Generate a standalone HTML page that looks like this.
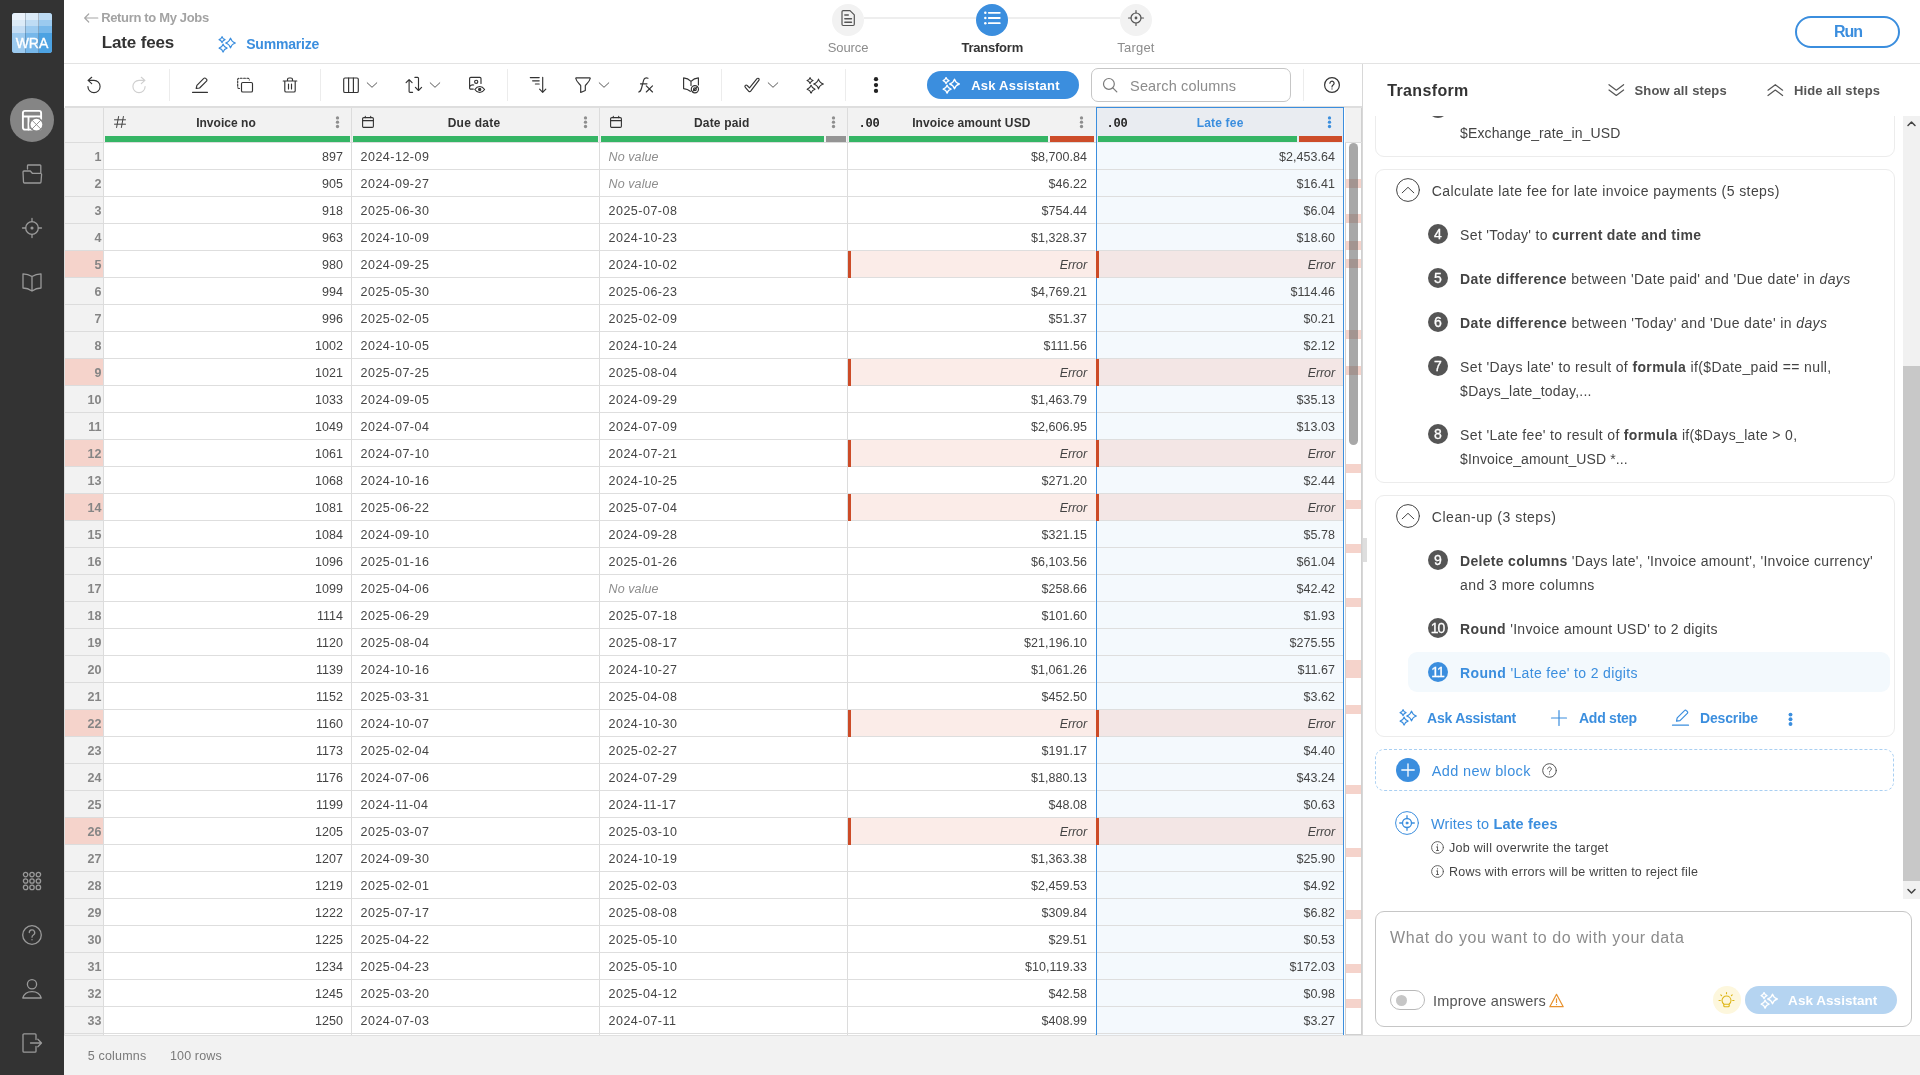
<!DOCTYPE html>
<html lang="en">
<head>
<meta charset="utf-8">
<title>Late fees - Transform</title>
<style>
html,body{margin:0;padding:0;}
body{width:1920px;height:1075px;overflow:hidden;background:#fff;font-family:"Liberation Sans",Arial,sans-serif;color:#444;}
#app{will-change:transform;position:relative;width:1920px;height:1075px;overflow:hidden;background:#fff;}
.a{position:absolute;}
.t{position:absolute;white-space:nowrap;}
b{font-weight:bold;}
svg{position:absolute;overflow:visible;}
.ic{fill:none;stroke:#333;stroke-width:1.15;stroke-linecap:round;stroke-linejoin:round;}
.side{position:absolute;left:0;top:0;width:64px;height:1075px;background:#333;}
.hdr{position:absolute;left:64px;top:0;width:1856px;height:63px;background:#fff;border-bottom:1px solid #e3e3e3;}
.foot{position:absolute;left:64px;top:1035px;width:1856px;height:39px;background:#f2f2f2;border-top:1px solid #e0e0e0;}
.sep{position:absolute;top:69px;width:1px;height:32px;background:#ececec;}
/* table */
.grid{position:absolute;left:65px;top:108px;width:1297px;height:927px;background:#fff;overflow:hidden;}
.hrow{position:absolute;left:0;top:0;width:1297px;height:35px;background:#f2f2f2;}
.rn{position:absolute;left:0;width:38px;height:26px;background:#f2f2f2;border-bottom:1px solid #dcdcdc;border-right:1px solid #dcdcdc;font-weight:bold;font-size:12.5px;line-height:29px;color:#858585;text-align:right;}
.rn span{padding-right:1.5px;}
.rn.e{background:#f5d3cb;}
.c{position:absolute;width:247px;height:26px;border-bottom:1px solid #dedede;border-right:1px solid #dcdcdc;font-size:12.5px;line-height:27px;color:#444;letter-spacing:0.5px;white-space:nowrap;}
.c span{position:absolute;top:1px;}
.c.l span{left:8.5px;}
.c.r span{right:8px;letter-spacing:0.04px;}
.c.nv span{color:#8e8e8e;font-style:italic;letter-spacing:0.1px;}
.c.err{background:#fbece8;}
.c.err span{font-style:italic;letter-spacing:-0.1px;right:8px;}
.c.err i.bar{position:absolute;left:0;top:0;width:3px;height:27px;background:#cc4b27;z-index:2;}
.c.nb{border-right-color:transparent;}
.c.sel{background:#f4f9fd;}
.c.sel.err{background:#f3e6e5;}
.hc{position:absolute;top:0;width:247px;height:35px;border-right:1px solid #dcdcdc;}
.hc .bar{position:absolute;left:1px;top:28px;height:6px;}
.hc .ttl{position:absolute;left:0;width:244px;top:5px;text-align:center;font-weight:bold;font-size:12px;line-height:20px;color:#333;}
</style>
</head>
<body>
<div id="app">
<div class="side">
<div class="a" style="left:12px;top:13px;width:40px;height:40px;border-radius:3px;overflow:hidden;background:#8ec3f0;">
<i class="a" style="left:0px;top:0px;width:13.6px;height:7.3px;background:#eaf2fb"></i><i class="a" style="left:0px;top:7px;width:13.6px;height:6.5px;background:#dcebf8"></i><i class="a" style="left:0px;top:13.2px;width:13.6px;height:7.3px;background:#c5def5"></i><i class="a" style="left:0px;top:20.2px;width:13.6px;height:20.1px;background:#9ccaef"></i><i class="a" style="left:13.3px;top:0px;width:13.7px;height:7.3px;background:#dcebf8"></i><i class="a" style="left:13.3px;top:7px;width:13.7px;height:6.5px;background:#bfdcf4"></i><i class="a" style="left:13.3px;top:13.2px;width:13.7px;height:7.3px;background:#9dcbf0"></i><i class="a" style="left:13.3px;top:20.2px;width:13.7px;height:20.1px;background:#76b7ea"></i><i class="a" style="left:26.7px;top:0px;width:13.6px;height:7.3px;background:#bddbf4"></i><i class="a" style="left:26.7px;top:7px;width:13.6px;height:6.5px;background:#9bcaef"></i><i class="a" style="left:26.7px;top:13.2px;width:13.6px;height:7.3px;background:#77b8ea"></i><i class="a" style="left:26.7px;top:20.2px;width:13.6px;height:20.1px;background:#4ca2e2"></i><i class="a" style="left:13px;top:0;width:1px;height:40px;background:rgba(60,70,80,0.28)"></i><i class="a" style="left:26px;top:0;width:1px;height:40px;background:rgba(60,70,80,0.28)"></i>
<div class="t" style="left:0;width:40px;text-align:center;top:22.3px;font-size:14px;line-height:16px;color:#fff;letter-spacing:0;-webkit-text-stroke:0.35px #fff;">WRA</div>
</div>
<div class="a" style="left:10px;top:98px;width:44px;height:44px;border-radius:22px;background:#858585;"></div>
<svg class="ic" style="left:21px;top:109px;stroke:#fff;stroke-width:1.9" width="22" height="22" viewBox="0 0 22 22"><rect x="1.900" y="1.900" width="18.200" height="18.700" rx="2"/><path d="M1.900,7.500 H20.100 M7.500,7.500 V20.600"/><circle cx="15.400" cy="15.600" r="7.200" fill="#858585" stroke="none"/><circle cx="15.400" cy="15.600" r="5.900" fill="#fff" stroke="none"/><path d="M11.200,11.400 L19.600,19.800 M19.600,11.400 L11.200,19.800" stroke="#858585" stroke-width="0.900"/></svg>
<svg class="ic" style="left:22px;top:164px;stroke:#9a9a9a;stroke-width:1.3" width="20" height="20" viewBox="0 0 20 20"><path d="M5.5,5 V1.8 a0.8,0.8 0 0 1 0.8,-0.8 H18 a0.8,0.8 0 0 1 0.8,0.8 V8.5 M1,8 a1,1 0 0 1 1,-1 H8.3 L10.3,9.3 H18.6 a1,1 0 0 1 1,1 L19,18 a1,1 0 0 1 -1,1 H2.5 a1,1 0 0 1 -1,-1 Z"/></svg>
<svg class="ic" style="left:22px;top:218px;stroke:#9a9a9a;stroke-width:1.3" width="20" height="20" viewBox="0 0 20 20"><circle cx="10" cy="10" r="6.3"/><circle cx="10" cy="10" r="0.9" fill="#9a9a9a"/><path d="M10,0.5 V3.7 M10,16.3 V19.5 M0.5,10 H3.7 M16.3,10 H19.5"/></svg>
<svg class="ic" style="left:22px;top:272px;stroke:#9a9a9a;stroke-width:1.3" width="20" height="20" viewBox="0 0 20 20"><path d="M10,4.5 C7.5,2.8 4,1.8 1,1.8 V16 C4,16 7.5,17.2 10,19 C12.500,17.2 16,16 19,16 V1.8 C16,1.8 12.5,2.8 10,4.5 V19"/></svg>
<svg class="ic" style="left:22px;top:871px;stroke:#9a9a9a;stroke-width:1.3" width="20" height="20" viewBox="0 0 20 20"><circle cx="3.6" cy="3.6" r="2.2"/><circle cx="3.6" cy="10.0" r="2.2"/><circle cx="3.6" cy="16.400000000000002" r="2.2"/><circle cx="10.0" cy="3.6" r="2.2"/><circle cx="10.0" cy="10.0" r="2.2"/><circle cx="10.0" cy="16.400000000000002" r="2.2"/><circle cx="16.400000000000002" cy="3.6" r="2.2"/><circle cx="16.400000000000002" cy="10.0" r="2.2"/><circle cx="16.400000000000002" cy="16.400000000000002" r="2.2"/></svg>
<svg class="ic" style="left:22px;top:925px;stroke:#9a9a9a;stroke-width:1.3" width="20" height="20" viewBox="0 0 20 20"><circle cx="10" cy="10" r="9.3"/><path d="M7.3,7.6 a2.7,2.7 0 1 1 4,2.4 c-0.9,0.5 -1.3,1 -1.3,2.2"/><circle cx="10" cy="14.7" r="0.7" fill="#9a9a9a" stroke="none"/></svg>
<svg class="ic" style="left:22px;top:979px;stroke:#9a9a9a;stroke-width:1.3" width="20" height="20" viewBox="0 0 20 20"><circle cx="10" cy="5.3" r="4.6"/><path d="M0.8,19 C2,14.7 5.5,12.6 10,12.6 C14.5,12.6 18,14.7 19.2,19 Z"/></svg>
<svg class="ic" style="left:22px;top:1033px;stroke:#9a9a9a;stroke-width:1.3" width="20" height="20" viewBox="0 0 20 20"><path d="M14,6.5 V1.8 a1,1 0 0 0 -1,-1 H2 a1,1 0 0 0 -1,1 V18.200 a1,1 0 0 0 1,1 H13 a1,1 0 0 0 1,-1 V13.500 M8.500,10 H19.300 M15.800,6.300 L19.500,10 L15.800,13.700"/></svg>
</div>
<div class="hdr"></div>
<svg class="ic" style="left:84px;top:11.5px;stroke:#a6a6a6;stroke-width:1.2" width="14" height="12" viewBox="0 0 14 12"><path d="M13.800,6 H0.700 M4.700,2 L0.700,6 L4.700,10"/></svg>
<div class="t" style="top:7.9px;font-size:13px;line-height:20px;color:#a3a3a3;letter-spacing:-0.341px;left:101.2px;"><b>Return to My Jobs</b></div>
<div class="t" style="top:31.2px;font-size:17px;line-height:24px;color:#333;letter-spacing:-0.156px;left:101.8px;"><b>Late fees</b></div>
<svg class="ic" style="left:218px;top:35.5px;stroke:#3b8ede;stroke-width:1.2" width="17" height="17" viewBox="0 0 17 17"><path d="M12.5,2.15 Q13.57,5.93 17.35,7 Q13.57,8.07 12.5,11.85 Q11.43,8.07 7.65,7 Q11.43,5.93 12.5,2.15Z M4.05,0.55 Q4.71,2.89 7.05,3.55 Q4.71,4.21 4.05,6.55 Q3.39,4.21 1.05,3.55 Q3.39,2.89 4.05,0.55Z M5.1,8.2 Q5.98,11.32 9.1,12.2 Q5.98,13.08 5.1,16.2 Q4.22,13.08 1.1,12.2 Q4.22,11.32 5.1,8.2Z"/></svg>
<div class="t" style="top:34.3px;font-size:14px;line-height:20px;color:#3b8ede;letter-spacing:-0.200px;left:246.2px;"><b>Summarize</b></div>
<div class="a" style="left:864px;top:17px;width:112px;height:2px;background:#eeeeee"></div>
<div class="a" style="left:1008px;top:17px;width:112px;height:2px;background:#eeeeee"></div>
<div class="a" style="left:832px;top:4px;width:32px;height:32px;border-radius:16px;background:#f2f2f2"></div>
<div class="a" style="left:976px;top:4px;width:32px;height:32px;border-radius:16px;background:#3b8ede"></div>
<div class="a" style="left:1120px;top:4px;width:32px;height:32px;border-radius:16px;background:#f2f2f2"></div>
<svg class="ic" style="left:840px;top:10px;stroke:#555;stroke-width:1.200" width="16" height="17" viewBox="0 0 16 17"><path d="M2,1.800 a1.200,1.200 0 0 1 1.200,-1.200 H10 L14.300,4.900 V14.300 a1.200,1.200 0 0 1 -1.200,1.200 H3.200 a1.200,1.200 0 0 1 -1.200,-1.200 Z"/><path d="M4.800,5 H8.300 M4.800,8.800 H11.500 M4.800,12.200 H11.500" stroke-width="1.400"/></svg>
<svg class="ic" style="left:984px;top:11px;stroke:#fff" width="16" height="16" viewBox="0 0 16 16"><path d="M4.800,1.800 H15.800 M4.800,7 H15.800 M4.800,12.200 H15.800" stroke-width="1.800"/><circle cx="1.300" cy="1.800" r="1.250" fill="#fff" stroke="none"/><circle cx="1.300" cy="7" r="1.250" fill="#fff" stroke="none"/><circle cx="1.300" cy="12.200" r="1.250" fill="#fff" stroke="none"/></svg>
<svg class="ic" style="left:1128px;top:10px;stroke:#555;stroke-width:1.2" width="16" height="16" viewBox="0 0 16 16"><circle cx="8" cy="8" r="5"/><circle cx="8" cy="8" r="0.800" fill="#555"/><path d="M8,0.500 V3 M8,13 V15.500 M0.500,8 H3 M13,8 H15.500"/></svg>
<div class="t" style="top:37.8px;font-size:13px;line-height:20px;color:#8c8c8c;letter-spacing:-0.082px;left:548.0px;width:600px;text-align:center;">Source</div>
<div class="t" style="top:37.8px;font-size:13px;line-height:20px;color:#333;letter-spacing:-0.219px;left:692.2px;width:600px;text-align:center;"><b>Transform</b></div>
<div class="t" style="top:37.8px;font-size:13px;line-height:20px;color:#8c8c8c;letter-spacing:0.195px;left:836.0px;width:600px;text-align:center;">Target</div>
<div class="a" style="left:1795px;top:16px;width:101px;height:28px;border:2px solid #3b8ede;border-radius:17px;"></div>
<div class="t" style="top:21.9px;font-size:16px;line-height:20px;color:#3b8ede;letter-spacing:-1.101px;left:1548.0px;width:600px;text-align:center;"><b>Run</b></div>
<div class="a" style="left:65px;top:106px;width:1297px;height:2px;background:#dedede"></div>
<div class="sep" style="left:169px"></div>
<div class="sep" style="left:320px"></div>
<div class="sep" style="left:507px"></div>
<div class="sep" style="left:721px"></div>
<div class="sep" style="left:845px"></div>
<div class="sep" style="left:1303px"></div>
<svg class="ic" style="left:86px;top:77px;stroke:#333;stroke-width:1.15" width="16" height="16" viewBox="0 0 16 16"><path d="M1.900,9.500 A6.100,6.100 0 1 0 8,3.400 H2.100 M5.700,0.300 L2.100,3.400 L5.700,6.600"/></svg>
<svg class="ic" style="left:131px;top:77px;stroke:#cfcfcf;stroke-width:1.15" width="16" height="16" viewBox="0 0 16 16"><path d="M14.100,9.500 A6.100,6.100 0 1 1 8,3.400 H13.900 M10.300,0.300 L13.900,3.400 L10.300,6.600"/></svg>
<svg class="ic" style="left:192px;top:77px;stroke:#333;stroke-width:1.15" width="16" height="16" viewBox="0 0 16 16"><path d="M4.200,11.400 L4.900,8.300 L11.800,1.400 a1.300,1.300 0 0 1 1.900,0 l0.800,0.800 a1.300,1.300 0 0 1 0,1.900 L7.600,11 Z M0.500,15.300 H15.500"/></svg>
<svg class="ic" style="left:237px;top:77px;stroke:#333;stroke-width:1.15" width="16" height="16" viewBox="0 0 16 16"><rect x="4.500" y="5.500" width="11" height="9.500" rx="1.300"/><path d="M2.500,11.500 H2 a1.300,1.300 0 0 1 -1.300,-1.300 V2.500 a1.300,1.300 0 0 1 1.300,-1.300 H11 a1.300,1.300 0 0 1 1.300,1.300 V3" stroke-dasharray="1.800 1.500"/></svg>
<svg class="ic" style="left:282px;top:77px;stroke:#333;stroke-width:1.15" width="16" height="16" viewBox="0 0 16 16"><path d="M1.200,4 H14.800 M5.500,4 V2.600 a1.600,1.600 0 0 1 1.600,-1.600 H8.900 a1.600,1.600 0 0 1 1.600,1.600 V4 M2.800,4 V13.700 a1.300,1.300 0 0 0 1.300,1.300 H11.900 a1.300,1.300 0 0 0 1.300,-1.300 V4 M6.500,7 V12 M9.500,7 V12"/></svg>
<svg class="ic" style="left:343px;top:77px;stroke:#333;stroke-width:1.15" width="16" height="16" viewBox="0 0 16 16"><rect x="0.700" y="1" width="14.600" height="14.500" rx="1.300"/><path d="M5.600,1 V15.500 M10.400,1 V15.500"/></svg>
<svg class="ic" style="left:366px;top:81px;stroke:#5a5a5a;stroke-width:1" width="12" height="8" viewBox="0 0 12 8"><path d="M1.200,1.800 L6,6.300 L10.800,1.800"/></svg>
<svg class="ic" style="left:405px;top:77px;stroke:#333;stroke-width:1.15" width="16" height="16" viewBox="0 0 16 16"><path d="M7.600,15.300 H5 a0.900,0.900 0 0 1 -0.900,-0.900 V2.700 M1.100,5.700 L4.100,2.600 L7.100,5.700 M9.900,0.400 H12.600 a0.900,0.900 0 0 1 0.900,0.900 V13.300 M10.400,10.300 L13.500,13.500 L16.600,10.300"/></svg>
<svg class="ic" style="left:429px;top:81px;stroke:#5a5a5a;stroke-width:1" width="12" height="8" viewBox="0 0 12 8"><path d="M1.200,1.800 L6,6.300 L10.800,1.800"/></svg>
<svg class="ic" style="left:468px;top:77px;stroke:#333;stroke-width:1.15" width="16" height="16" viewBox="0 0 16 16"><path d="M5.300,12.100 H2.800 a1.200,1.200 0 0 1 -1.200,-1.200 V1.600 a1.200,1.200 0 0 1 1.200,-1.200 H11.800 a1.200,1.200 0 0 1 1.200,1.200 V6.500 M1.800,9.500 C2.500,8.300 4,7.700 5.800,8"/><circle cx="8.200" cy="4.800" r="1.600"/><path d="M6.800,12.500 C8.300,10.300 10,9.500 11.700,9.500 C13.400,9.500 15.100,10.300 16.600,12.500 C15.100,14.700 13.400,15.500 11.700,15.500 C10,15.500 8.300,14.700 6.800,12.500 Z"/><circle cx="11.700" cy="12.500" r="1.100" fill="#333"/></svg>
<svg class="ic" style="left:530px;top:77px;stroke:#333;stroke-width:1.15" width="16" height="16" viewBox="0 0 16 16"><path d="M0.300,0.600 H9.200 M2.600,3.800 H9.200 M5.400,7 H9.200 M12.700,0.300 V15.200 M9.600,12.200 L12.700,15.400 L15.800,12.200"/></svg>
<svg class="ic" style="left:574.8px;top:77px;stroke:#333;stroke-width:1.15" width="16" height="16" viewBox="0 0 16 16"><path d="M0.800,1.500 a0.500,0.500 0 0 1 0.400,-0.700 H14.800 a0.500,0.500 0 0 1 0.400,0.700 C14.500,5 11.500,7 10.300,8.500 V13.500 L5.700,15.500 V8.500 C4.500,7 1.500,5 0.800,1.500 Z"/></svg>
<svg class="ic" style="left:598px;top:81px;stroke:#5a5a5a;stroke-width:1" width="12" height="8" viewBox="0 0 12 8"><path d="M1.200,1.800 L6,6.300 L10.800,1.800"/></svg>
<svg class="ic" style="left:638px;top:77px;stroke:#333;stroke-width:1.15" width="16" height="16" viewBox="0 0 16 16"><path d="M0.700,15 C2.500,14.800 3,13.500 3.600,11 L5.500,3.600 C6.100,1.500 7.500,0.300 10,1.200 M2.500,6.800 H9 M8.300,8.800 L14.500,15 M14.500,8.800 L8.300,15"/></svg>
<svg class="ic" style="left:683px;top:77px;stroke:#333;stroke-width:1.15" width="16" height="16" viewBox="0 0 16 16"><path d="M7.300,14.300 C5.500,12.800 3.300,11.900 0.600,11.600 V0.900 C3.500,1.100 6,2.300 8,4.300 C10,2.300 12.500,1.100 15.400,0.900 V8 M8,4.300 V8.500"/><circle cx="11.900" cy="12.200" r="3.600"/><circle cx="11.900" cy="12.200" r="1.400"/><path d="M9.500,14.600 L14.300,9.800"/></svg>
<svg class="ic" style="left:744px;top:77px;stroke:#333;stroke-width:1.15" width="16" height="16" viewBox="0 0 16 16"><path d="M1.300,10.300 a1.300,1.300 0 0 1 1.900,-1.800 L5.500,10.800 L13,1.600 a1.300,1.300 0 0 1 2,1.600 L6.700,14.200 a1.300,1.300 0 0 1 -1.900,0.100 Z"/></svg>
<svg class="ic" style="left:767px;top:81px;stroke:#5a5a5a;stroke-width:1" width="12" height="8" viewBox="0 0 12 8"><path d="M1.200,1.800 L6,6.300 L10.800,1.800"/></svg>
<svg class="ic" style="left:806px;top:76.5px;stroke:#333;stroke-width:1.1" width="17" height="17" viewBox="0 0 17 17"><path d="M12.5,2.15 Q13.57,5.93 17.35,7 Q13.57,8.07 12.5,11.85 Q11.43,8.07 7.65,7 Q11.43,5.93 12.5,2.15Z M4.05,0.55 Q4.71,2.89 7.05,3.55 Q4.71,4.21 4.05,6.55 Q3.39,4.21 1.05,3.55 Q3.39,2.89 4.05,0.55Z M5.1,8.2 Q5.98,11.32 9.1,12.2 Q5.98,13.08 5.1,16.2 Q4.22,13.08 1.1,12.2 Q4.22,11.32 5.1,8.2Z"/></svg>
<svg style="left:872px;top:75px" width="8" height="20" viewBox="0 0 8 20"><circle cx="4" cy="4.200" r="2.150" fill="#222"/><circle cx="4" cy="10.050" r="2.150" fill="#222"/><circle cx="4" cy="15.900" r="2.150" fill="#222"/></svg>
<div class="a" style="left:927px;top:71px;width:152px;height:28px;border-radius:14px;background:#3b8ede"></div>
<svg class="ic" style="left:942px;top:76.5px;stroke:#fff;stroke-width:1.3" width="17" height="17" viewBox="0 0 17 17"><path d="M12.5,2.15 Q13.57,5.93 17.35,7 Q13.57,8.07 12.5,11.85 Q11.43,8.07 7.65,7 Q11.43,5.93 12.5,2.15Z M4.05,0.55 Q4.71,2.89 7.05,3.55 Q4.71,4.21 4.05,6.55 Q3.39,4.21 1.05,3.55 Q3.39,2.89 4.05,0.55Z M5.1,8.2 Q5.98,11.32 9.1,12.2 Q5.98,13.08 5.1,16.2 Q4.22,13.08 1.1,12.2 Q4.22,11.32 5.1,8.2Z"/></svg>
<div class="t" style="top:76.0px;font-size:13px;line-height:20px;color:#fff;letter-spacing:0.239px;left:971.2px;"><b>Ask Assistant</b></div>
<div class="a" style="left:1091px;top:68px;width:198px;height:32px;border:1px solid #c6c6c6;border-radius:7px;"></div>
<svg class="ic" style="left:1102px;top:77px;stroke:#7a7a7a;stroke-width:1.2" width="16" height="16" viewBox="0 0 16 16"><circle cx="6.900" cy="6.900" r="5.400"/><path d="M10.800,10.800 L14.800,14.800"/></svg>
<div class="t" style="top:76.0px;font-size:14.5px;line-height:20px;color:#8c8c8c;letter-spacing:0.145px;left:1130.1px;">Search columns</div>
<svg class="ic" style="left:1324px;top:77px;stroke:#333;stroke-width:1.2" width="16" height="16" viewBox="0 0 16 16"><circle cx="8" cy="8" r="7.400"/><path d="M5.900,6.200 a2.100,2.100 0 1 1 3.200,1.900 c-0.800,0.500 -1.100,0.900 -1.100,1.800"/><circle cx="8" cy="11.900" r="0.600" fill="#333" stroke="none"/></svg>
<div class="a" style="left:1362px;top:64px;width:1px;height:971px;background:#d8d8d8"></div>
<div class="a" style="left:1363px;top:538px;width:4px;height:24px;background:#dedede"></div>
<div class="grid">
<div class="hrow"></div>
<div class="a" style="left:0;top:34px;width:1297px;height:1px;background:#dcdcdc"></div>
<div class="a" style="left:38px;top:0;width:1px;height:35px;background:#dcdcdc"></div>
<div class="hc" style="left:39px;"><svg class="ic" style="left:10px;top:8px;stroke:#444;stroke-width:1" width="12" height="12" viewBox="0 0 12 12"><path d="M4.600,0.500 L2.600,11.500 M9.400,0.500 L7.400,11.500 M0.500,3.800 H11.500 M0.500,8.200 H11.500"/></svg><div class="ttl" style="left:-0.04px;color:#333;letter-spacing:0.026px">Invoice no</div><svg style="left:230.500px;top:7.500px" width="5" height="13" viewBox="0 0 5 13"><circle cx="2.500" cy="1.900" r="1.650" fill="#8e8e8e"/><circle cx="2.500" cy="6.200" r="1.650" fill="#8e8e8e"/><circle cx="2.500" cy="10.500" r="1.650" fill="#8e8e8e"/></svg><i class="bar" style="left:1px;width:245px;background:#35b565"></i></div>
<div class="hc" style="left:287px;"><svg class="ic" style="left:10px;top:8px;stroke:#333;stroke-width:1.100" width="12" height="12" viewBox="0 0 12 12"><rect x="0.600" y="1.600" width="10.800" height="9.800" rx="1.200"/><path d="M0.600,4.600 H11.400 M3.300,0.400 V1.600 M8.700,0.400 V1.600"/></svg><div class="ttl" style="left:0.02px;color:#333;letter-spacing:0.240px">Due date</div><svg style="left:230.500px;top:7.500px" width="5" height="13" viewBox="0 0 5 13"><circle cx="2.500" cy="1.900" r="1.650" fill="#8e8e8e"/><circle cx="2.500" cy="6.200" r="1.650" fill="#8e8e8e"/><circle cx="2.500" cy="10.500" r="1.650" fill="#8e8e8e"/></svg><i class="bar" style="left:1px;width:245px;background:#35b565"></i></div>
<div class="hc" style="left:535px;"><svg class="ic" style="left:10px;top:8px;stroke:#333;stroke-width:1.100" width="12" height="12" viewBox="0 0 12 12"><rect x="0.600" y="1.600" width="10.800" height="9.800" rx="1.200"/><path d="M0.600,4.600 H11.400 M3.300,0.400 V1.600 M8.700,0.400 V1.600"/></svg><div class="ttl" style="left:-0.21px;color:#333;letter-spacing:0.176px">Date paid</div><svg style="left:230.500px;top:7.500px" width="5" height="13" viewBox="0 0 5 13"><circle cx="2.500" cy="1.900" r="1.650" fill="#8e8e8e"/><circle cx="2.500" cy="6.200" r="1.650" fill="#8e8e8e"/><circle cx="2.500" cy="10.500" r="1.650" fill="#8e8e8e"/></svg><i class="bar" style="left:1px;width:223px;background:#35b565"></i><i class="bar" style="left:226px;width:20px;background:#949494"></i></div>
<div class="hc" style="left:783px;border-right-color:transparent;"><div class="t" style="left:10.500px;top:6px;font-family:'Liberation Mono',monospace;font-weight:bold;font-size:12px;line-height:20px;color:#222;letter-spacing:-0.200px">.00</div><div class="ttl" style="left:1.34px;color:#333;letter-spacing:0.090px">Invoice amount USD</div><svg style="left:230.500px;top:7.500px" width="5" height="13" viewBox="0 0 5 13"><circle cx="2.500" cy="1.900" r="1.650" fill="#8e8e8e"/><circle cx="2.500" cy="6.200" r="1.650" fill="#8e8e8e"/><circle cx="2.500" cy="10.500" r="1.650" fill="#8e8e8e"/></svg><i class="bar" style="left:1px;width:199px;background:#35b565"></i><i class="bar" style="left:202px;width:44px;background:#cd4d2a"></i></div>
<div class="hc" style="left:1031px;background:#e9ecf1;"><div class="t" style="left:10.500px;top:6px;font-family:'Liberation Mono',monospace;font-weight:bold;font-size:12px;line-height:20px;color:#222;letter-spacing:-0.200px">.00</div><div class="ttl" style="left:2.10px;color:#3b8ede;letter-spacing:0.194px">Late fee</div><svg style="left:230.500px;top:7.500px" width="5" height="13" viewBox="0 0 5 13"><circle cx="2.500" cy="1.900" r="1.650" fill="#3b8ede"/><circle cx="2.500" cy="6.200" r="1.650" fill="#3b8ede"/><circle cx="2.500" cy="10.500" r="1.650" fill="#3b8ede"/></svg><i class="bar" style="left:2px;width:199px;background:#35b565"></i><i class="bar" style="left:203px;width:43px;background:#cd4d2a"></i></div>
<div class="rn" style="top:35px"><span>1</span></div><div class="c r" style="left:39px;top:35px"><span>897</span></div><div class="c l" style="left:287px;top:35px"><span>2024-12-09</span></div><div class="c l nv" style="left:535px;top:35px"><span>No value</span></div><div class="c r nb" style="left:783px;top:35px"><span>$8,700.84</span></div><div class="c r sel" style="left:1031px;top:35px"><span>$2,453.64</span></div>
<div class="rn" style="top:62px"><span>2</span></div><div class="c r" style="left:39px;top:62px"><span>905</span></div><div class="c l" style="left:287px;top:62px"><span>2024-09-27</span></div><div class="c l nv" style="left:535px;top:62px"><span>No value</span></div><div class="c r nb" style="left:783px;top:62px"><span>$46.22</span></div><div class="c r sel" style="left:1031px;top:62px"><span>$16.41</span></div>
<div class="rn" style="top:89px"><span>3</span></div><div class="c r" style="left:39px;top:89px"><span>918</span></div><div class="c l" style="left:287px;top:89px"><span>2025-06-30</span></div><div class="c l" style="left:535px;top:89px"><span>2025-07-08</span></div><div class="c r nb" style="left:783px;top:89px"><span>$754.44</span></div><div class="c r sel" style="left:1031px;top:89px"><span>$6.04</span></div>
<div class="rn" style="top:116px"><span>4</span></div><div class="c r" style="left:39px;top:116px"><span>963</span></div><div class="c l" style="left:287px;top:116px"><span>2024-10-09</span></div><div class="c l" style="left:535px;top:116px"><span>2024-10-23</span></div><div class="c r nb" style="left:783px;top:116px"><span>$1,328.37</span></div><div class="c r sel" style="left:1031px;top:116px"><span>$18.60</span></div>
<div class="rn e" style="top:143px"><span>5</span></div><div class="c r" style="left:39px;top:143px"><span>980</span></div><div class="c l" style="left:287px;top:143px"><span>2024-09-25</span></div><div class="c l" style="left:535px;top:143px"><span>2024-10-02</span></div><div class="c r err nb" style="left:783px;top:143px"><i class="bar"></i><span>Error</span></div><div class="c r err sel" style="left:1031px;top:143px"><i class="bar"></i><span>Error</span></div>
<div class="rn" style="top:170px"><span>6</span></div><div class="c r" style="left:39px;top:170px"><span>994</span></div><div class="c l" style="left:287px;top:170px"><span>2025-05-30</span></div><div class="c l" style="left:535px;top:170px"><span>2025-06-23</span></div><div class="c r nb" style="left:783px;top:170px"><span>$4,769.21</span></div><div class="c r sel" style="left:1031px;top:170px"><span>$114.46</span></div>
<div class="rn" style="top:197px"><span>7</span></div><div class="c r" style="left:39px;top:197px"><span>996</span></div><div class="c l" style="left:287px;top:197px"><span>2025-02-05</span></div><div class="c l" style="left:535px;top:197px"><span>2025-02-09</span></div><div class="c r nb" style="left:783px;top:197px"><span>$51.37</span></div><div class="c r sel" style="left:1031px;top:197px"><span>$0.21</span></div>
<div class="rn" style="top:224px"><span>8</span></div><div class="c r" style="left:39px;top:224px"><span>1002</span></div><div class="c l" style="left:287px;top:224px"><span>2024-10-05</span></div><div class="c l" style="left:535px;top:224px"><span>2024-10-24</span></div><div class="c r nb" style="left:783px;top:224px"><span>$111.56</span></div><div class="c r sel" style="left:1031px;top:224px"><span>$2.12</span></div>
<div class="rn e" style="top:251px"><span>9</span></div><div class="c r" style="left:39px;top:251px"><span>1021</span></div><div class="c l" style="left:287px;top:251px"><span>2025-07-25</span></div><div class="c l" style="left:535px;top:251px"><span>2025-08-04</span></div><div class="c r err nb" style="left:783px;top:251px"><i class="bar"></i><span>Error</span></div><div class="c r err sel" style="left:1031px;top:251px"><i class="bar"></i><span>Error</span></div>
<div class="rn" style="top:278px"><span>10</span></div><div class="c r" style="left:39px;top:278px"><span>1033</span></div><div class="c l" style="left:287px;top:278px"><span>2024-09-05</span></div><div class="c l" style="left:535px;top:278px"><span>2024-09-29</span></div><div class="c r nb" style="left:783px;top:278px"><span>$1,463.79</span></div><div class="c r sel" style="left:1031px;top:278px"><span>$35.13</span></div>
<div class="rn" style="top:305px"><span>11</span></div><div class="c r" style="left:39px;top:305px"><span>1049</span></div><div class="c l" style="left:287px;top:305px"><span>2024-07-04</span></div><div class="c l" style="left:535px;top:305px"><span>2024-07-09</span></div><div class="c r nb" style="left:783px;top:305px"><span>$2,606.95</span></div><div class="c r sel" style="left:1031px;top:305px"><span>$13.03</span></div>
<div class="rn e" style="top:332px"><span>12</span></div><div class="c r" style="left:39px;top:332px"><span>1061</span></div><div class="c l" style="left:287px;top:332px"><span>2024-07-10</span></div><div class="c l" style="left:535px;top:332px"><span>2024-07-21</span></div><div class="c r err nb" style="left:783px;top:332px"><i class="bar"></i><span>Error</span></div><div class="c r err sel" style="left:1031px;top:332px"><i class="bar"></i><span>Error</span></div>
<div class="rn" style="top:359px"><span>13</span></div><div class="c r" style="left:39px;top:359px"><span>1068</span></div><div class="c l" style="left:287px;top:359px"><span>2024-10-16</span></div><div class="c l" style="left:535px;top:359px"><span>2024-10-25</span></div><div class="c r nb" style="left:783px;top:359px"><span>$271.20</span></div><div class="c r sel" style="left:1031px;top:359px"><span>$2.44</span></div>
<div class="rn e" style="top:386px"><span>14</span></div><div class="c r" style="left:39px;top:386px"><span>1081</span></div><div class="c l" style="left:287px;top:386px"><span>2025-06-22</span></div><div class="c l" style="left:535px;top:386px"><span>2025-07-04</span></div><div class="c r err nb" style="left:783px;top:386px"><i class="bar"></i><span>Error</span></div><div class="c r err sel" style="left:1031px;top:386px"><i class="bar"></i><span>Error</span></div>
<div class="rn" style="top:413px"><span>15</span></div><div class="c r" style="left:39px;top:413px"><span>1084</span></div><div class="c l" style="left:287px;top:413px"><span>2024-09-10</span></div><div class="c l" style="left:535px;top:413px"><span>2024-09-28</span></div><div class="c r nb" style="left:783px;top:413px"><span>$321.15</span></div><div class="c r sel" style="left:1031px;top:413px"><span>$5.78</span></div>
<div class="rn" style="top:440px"><span>16</span></div><div class="c r" style="left:39px;top:440px"><span>1096</span></div><div class="c l" style="left:287px;top:440px"><span>2025-01-16</span></div><div class="c l" style="left:535px;top:440px"><span>2025-01-26</span></div><div class="c r nb" style="left:783px;top:440px"><span>$6,103.56</span></div><div class="c r sel" style="left:1031px;top:440px"><span>$61.04</span></div>
<div class="rn" style="top:467px"><span>17</span></div><div class="c r" style="left:39px;top:467px"><span>1099</span></div><div class="c l" style="left:287px;top:467px"><span>2025-04-06</span></div><div class="c l nv" style="left:535px;top:467px"><span>No value</span></div><div class="c r nb" style="left:783px;top:467px"><span>$258.66</span></div><div class="c r sel" style="left:1031px;top:467px"><span>$42.42</span></div>
<div class="rn" style="top:494px"><span>18</span></div><div class="c r" style="left:39px;top:494px"><span>1114</span></div><div class="c l" style="left:287px;top:494px"><span>2025-06-29</span></div><div class="c l" style="left:535px;top:494px"><span>2025-07-18</span></div><div class="c r nb" style="left:783px;top:494px"><span>$101.60</span></div><div class="c r sel" style="left:1031px;top:494px"><span>$1.93</span></div>
<div class="rn" style="top:521px"><span>19</span></div><div class="c r" style="left:39px;top:521px"><span>1120</span></div><div class="c l" style="left:287px;top:521px"><span>2025-08-04</span></div><div class="c l" style="left:535px;top:521px"><span>2025-08-17</span></div><div class="c r nb" style="left:783px;top:521px"><span>$21,196.10</span></div><div class="c r sel" style="left:1031px;top:521px"><span>$275.55</span></div>
<div class="rn" style="top:548px"><span>20</span></div><div class="c r" style="left:39px;top:548px"><span>1139</span></div><div class="c l" style="left:287px;top:548px"><span>2024-10-16</span></div><div class="c l" style="left:535px;top:548px"><span>2024-10-27</span></div><div class="c r nb" style="left:783px;top:548px"><span>$1,061.26</span></div><div class="c r sel" style="left:1031px;top:548px"><span>$11.67</span></div>
<div class="rn" style="top:575px"><span>21</span></div><div class="c r" style="left:39px;top:575px"><span>1152</span></div><div class="c l" style="left:287px;top:575px"><span>2025-03-31</span></div><div class="c l" style="left:535px;top:575px"><span>2025-04-08</span></div><div class="c r nb" style="left:783px;top:575px"><span>$452.50</span></div><div class="c r sel" style="left:1031px;top:575px"><span>$3.62</span></div>
<div class="rn e" style="top:602px"><span>22</span></div><div class="c r" style="left:39px;top:602px"><span>1160</span></div><div class="c l" style="left:287px;top:602px"><span>2024-10-07</span></div><div class="c l" style="left:535px;top:602px"><span>2024-10-30</span></div><div class="c r err nb" style="left:783px;top:602px"><i class="bar"></i><span>Error</span></div><div class="c r err sel" style="left:1031px;top:602px"><i class="bar"></i><span>Error</span></div>
<div class="rn" style="top:629px"><span>23</span></div><div class="c r" style="left:39px;top:629px"><span>1173</span></div><div class="c l" style="left:287px;top:629px"><span>2025-02-04</span></div><div class="c l" style="left:535px;top:629px"><span>2025-02-27</span></div><div class="c r nb" style="left:783px;top:629px"><span>$191.17</span></div><div class="c r sel" style="left:1031px;top:629px"><span>$4.40</span></div>
<div class="rn" style="top:656px"><span>24</span></div><div class="c r" style="left:39px;top:656px"><span>1176</span></div><div class="c l" style="left:287px;top:656px"><span>2024-07-06</span></div><div class="c l" style="left:535px;top:656px"><span>2024-07-29</span></div><div class="c r nb" style="left:783px;top:656px"><span>$1,880.13</span></div><div class="c r sel" style="left:1031px;top:656px"><span>$43.24</span></div>
<div class="rn" style="top:683px"><span>25</span></div><div class="c r" style="left:39px;top:683px"><span>1199</span></div><div class="c l" style="left:287px;top:683px"><span>2024-11-04</span></div><div class="c l" style="left:535px;top:683px"><span>2024-11-17</span></div><div class="c r nb" style="left:783px;top:683px"><span>$48.08</span></div><div class="c r sel" style="left:1031px;top:683px"><span>$0.63</span></div>
<div class="rn e" style="top:710px"><span>26</span></div><div class="c r" style="left:39px;top:710px"><span>1205</span></div><div class="c l" style="left:287px;top:710px"><span>2025-03-07</span></div><div class="c l" style="left:535px;top:710px"><span>2025-03-10</span></div><div class="c r err nb" style="left:783px;top:710px"><i class="bar"></i><span>Error</span></div><div class="c r err sel" style="left:1031px;top:710px"><i class="bar"></i><span>Error</span></div>
<div class="rn" style="top:737px"><span>27</span></div><div class="c r" style="left:39px;top:737px"><span>1207</span></div><div class="c l" style="left:287px;top:737px"><span>2024-09-30</span></div><div class="c l" style="left:535px;top:737px"><span>2024-10-19</span></div><div class="c r nb" style="left:783px;top:737px"><span>$1,363.38</span></div><div class="c r sel" style="left:1031px;top:737px"><span>$25.90</span></div>
<div class="rn" style="top:764px"><span>28</span></div><div class="c r" style="left:39px;top:764px"><span>1219</span></div><div class="c l" style="left:287px;top:764px"><span>2025-02-01</span></div><div class="c l" style="left:535px;top:764px"><span>2025-02-03</span></div><div class="c r nb" style="left:783px;top:764px"><span>$2,459.53</span></div><div class="c r sel" style="left:1031px;top:764px"><span>$4.92</span></div>
<div class="rn" style="top:791px"><span>29</span></div><div class="c r" style="left:39px;top:791px"><span>1222</span></div><div class="c l" style="left:287px;top:791px"><span>2025-07-17</span></div><div class="c l" style="left:535px;top:791px"><span>2025-08-08</span></div><div class="c r nb" style="left:783px;top:791px"><span>$309.84</span></div><div class="c r sel" style="left:1031px;top:791px"><span>$6.82</span></div>
<div class="rn" style="top:818px"><span>30</span></div><div class="c r" style="left:39px;top:818px"><span>1225</span></div><div class="c l" style="left:287px;top:818px"><span>2025-04-22</span></div><div class="c l" style="left:535px;top:818px"><span>2025-05-10</span></div><div class="c r nb" style="left:783px;top:818px"><span>$29.51</span></div><div class="c r sel" style="left:1031px;top:818px"><span>$0.53</span></div>
<div class="rn" style="top:845px"><span>31</span></div><div class="c r" style="left:39px;top:845px"><span>1234</span></div><div class="c l" style="left:287px;top:845px"><span>2025-04-23</span></div><div class="c l" style="left:535px;top:845px"><span>2025-05-10</span></div><div class="c r nb" style="left:783px;top:845px"><span>$10,119.33</span></div><div class="c r sel" style="left:1031px;top:845px"><span>$172.03</span></div>
<div class="rn" style="top:872px"><span>32</span></div><div class="c r" style="left:39px;top:872px"><span>1245</span></div><div class="c l" style="left:287px;top:872px"><span>2025-03-20</span></div><div class="c l" style="left:535px;top:872px"><span>2025-04-12</span></div><div class="c r nb" style="left:783px;top:872px"><span>$42.58</span></div><div class="c r sel" style="left:1031px;top:872px"><span>$0.98</span></div>
<div class="rn" style="top:899px"><span>33</span></div><div class="c r" style="left:39px;top:899px"><span>1250</span></div><div class="c l" style="left:287px;top:899px"><span>2024-07-03</span></div><div class="c l" style="left:535px;top:899px"><span>2024-07-11</span></div><div class="c r nb" style="left:783px;top:899px"><span>$408.99</span></div><div class="c r sel" style="left:1031px;top:899px"><span>$3.27</span></div>
<div class="rn" style="top:926px"></div><div class="c" style="left:39px;top:926px"></div><div class="c" style="left:287px;top:926px"></div><div class="c" style="left:535px;top:926px"></div><div class="c" style="left:783px;top:926px"></div><div class="c sel" style="left:1031px;top:926px"></div>
<div class="a" style="left:1031px;top:0;width:1px;height:927px;background:#3b8ede"></div>
<div class="a" style="left:1278px;top:0;width:1px;height:927px;background:#3b8ede"></div>
<div class="a" style="left:1279px;top:0;width:18px;height:35px;background:#f2f2f2"></div>
<div class="a" style="left:1279px;top:0;width:1px;height:927px;background:#fff"></div>
<div class="a" style="left:1280px;top:35px;width:15px;height:891px;background:#fff;border:1px solid #d0d0d0;border-top:none;"></div>
<div class="a" style="left:1296px;top:0;width:1px;height:35px;background:#d0d0d0"></div>
<div class="a" style="left:1280px;top:34px;width:17px;height:1px;background:#dcdcdc"></div>
<i class="a" style="left:1281px;top:70.7px;width:15px;height:9px;background:#f5d3cb"></i><i class="a" style="left:1281px;top:106.4px;width:15px;height:9px;background:#f5d3cb"></i><i class="a" style="left:1281px;top:133.1px;width:15px;height:9px;background:#f5d3cb"></i><i class="a" style="left:1281px;top:151.0px;width:15px;height:9px;background:#f5d3cb"></i><i class="a" style="left:1281px;top:222.3px;width:15px;height:9px;background:#f5d3cb"></i><i class="a" style="left:1281px;top:258.0px;width:15px;height:9px;background:#f5d3cb"></i><i class="a" style="left:1281px;top:356.1px;width:15px;height:9px;background:#f5d3cb"></i><i class="a" style="left:1281px;top:391.8px;width:15px;height:9px;background:#f5d3cb"></i><i class="a" style="left:1281px;top:436.4px;width:15px;height:9px;background:#f5d3cb"></i><i class="a" style="left:1281px;top:489.9px;width:15px;height:9px;background:#f5d3cb"></i><i class="a" style="left:1281px;top:552.4px;width:15px;height:9px;background:#f5d3cb"></i><i class="a" style="left:1281px;top:561.3px;width:15px;height:9px;background:#f5d3cb"></i><i class="a" style="left:1281px;top:597.0px;width:15px;height:9px;background:#f5d3cb"></i><i class="a" style="left:1281px;top:677.2px;width:15px;height:9px;background:#f5d3cb"></i><i class="a" style="left:1281px;top:739.7px;width:15px;height:9px;background:#f5d3cb"></i><i class="a" style="left:1281px;top:802.1px;width:15px;height:9px;background:#f5d3cb"></i><i class="a" style="left:1281px;top:855.6px;width:15px;height:9px;background:#f5d3cb"></i><i class="a" style="left:1281px;top:891.3px;width:15px;height:9px;background:#f5d3cb"></i>
<div class="a" style="left:1284px;top:35px;width:9px;height:302px;border-radius:5px;background:rgba(94,94,94,0.54)"></div>
</div>
<div class="a" style="left:1096px;top:107px;width:248px;height:1px;background:#3b8ede"></div>
<div class="a" style="left:64px;top:108px;width:1px;height:928px;background:#dedede"></div>
<div class="foot"></div>
<div class="t" style="top:1045.5px;font-size:12.5px;line-height:20px;color:#7a7a7a;letter-spacing:0.170px;left:87.8px;">5 columns</div>
<div class="t" style="top:1045.5px;font-size:12.5px;line-height:20px;color:#7a7a7a;letter-spacing:0.135px;left:170.0px;">100 rows</div>
<div class="t" style="top:80.2px;font-size:16px;line-height:22px;color:#333;letter-spacing:0.362px;left:1387.2px;"><b>Transform</b></div>
<svg class="ic" style="left:1608px;top:83px;stroke:#555;stroke-width:1.200" width="16" height="14" viewBox="0 0 16 14"><path d="M1,1.700 L8.300,7.200 L15.600,1.700 M1,7 L8.300,12.500 L15.600,7"/></svg>
<div class="t" style="top:81.1px;font-size:13px;line-height:20px;color:#555;letter-spacing:0.143px;left:1634.5px;"><b>Show all steps</b></div>
<svg class="ic" style="left:1767px;top:83px;stroke:#555;stroke-width:1.200" width="16" height="14" viewBox="0 0 16 14"><path d="M1,7.200 L8.300,1.700 L15.600,7.200 M1,12.500 L8.300,7 L15.600,12.500"/></svg>
<div class="t" style="top:81.1px;font-size:13px;line-height:20px;color:#555;letter-spacing:0.178px;left:1793.9px;"><b>Hide all steps</b></div>
<div class="a" style="left:1363px;top:116px;width:540px;height:783px;overflow:hidden;">
<div class="a" style="left:12px;top:-56px;width:518px;height:95px;border:1px solid #ececec;border-radius:9px;"></div>
<div class="a" style="left:65px;top:-18.5px;width:20px;height:20px;border-radius:10px;background:#555"></div>
<div class="t" style="left:97.1px;top:5.0px;font-size:14px;line-height:24px;color:#444;letter-spacing:0.110px;">$Exchange_rate_in_USD</div>
<div class="a" style="left:12px;top:53px;width:518px;height:312px;border:1px solid #ececec;border-radius:9px;"></div>
<svg class="ic" style="left:33px;top:62px;stroke:#444;stroke-width:1" width="24" height="24" viewBox="0 0 24 24"><circle cx="12" cy="12" r="11.400"/><path d="M6.200,14.800 L12,9.300 L17.800,14.800"/></svg>
<div class="t" style="left:68.8px;top:62.5px;font-size:14px;line-height:24px;color:#444;letter-spacing:0.421px;">Calculate late fee for late invoice payments (5 steps)</div>
<div class="a" style="left:65px;top:108px;width:20px;height:20px;border-radius:10px;background:#555;color:#fff;font-size:14px;-webkit-text-stroke:0.3px #fff;line-height:20.5px;text-align:center;">4</div>
<div class="t" style="left:97.1px;top:107.0px;font-size:14px;line-height:24px;color:#444;letter-spacing:0.330px;">Set 'Today' to <b>current date and time</b></div>
<div class="a" style="left:65px;top:152px;width:20px;height:20px;border-radius:10px;background:#555;color:#fff;font-size:14px;-webkit-text-stroke:0.3px #fff;line-height:20.5px;text-align:center;">5</div>
<div class="t" style="left:97.1px;top:151.0px;font-size:14px;line-height:24px;color:#444;letter-spacing:0.376px;"><b>Date difference</b> between 'Date paid' and 'Due date' in <i>days</i></div>
<div class="a" style="left:65px;top:196px;width:20px;height:20px;border-radius:10px;background:#555;color:#fff;font-size:14px;-webkit-text-stroke:0.3px #fff;line-height:20.5px;text-align:center;">6</div>
<div class="t" style="left:97.1px;top:195.0px;font-size:14px;line-height:24px;color:#444;letter-spacing:0.392px;"><b>Date difference</b> between 'Today' and 'Due date' in <i>days</i></div>
<div class="a" style="left:65px;top:240px;width:20px;height:20px;border-radius:10px;background:#555;color:#fff;font-size:14px;-webkit-text-stroke:0.3px #fff;line-height:20.5px;text-align:center;">7</div>
<div class="t" style="left:97.1px;top:239.0px;font-size:14px;line-height:24px;color:#444;letter-spacing:0.363px;">Set 'Days late' to result of <b>formula</b> if($Date_paid == null,</div>
<div class="t" style="left:97.1px;top:263.0px;font-size:14px;line-height:24px;color:#444;letter-spacing:0.250px;">$Days_late_today,...</div>
<div class="a" style="left:65px;top:308px;width:20px;height:20px;border-radius:10px;background:#555;color:#fff;font-size:14px;-webkit-text-stroke:0.3px #fff;line-height:20.5px;text-align:center;">8</div>
<div class="t" style="left:97.1px;top:307.0px;font-size:14px;line-height:24px;color:#444;letter-spacing:0.349px;">Set 'Late fee' to result of <b>formula</b> if($Days_late &gt; 0,</div>
<div class="t" style="left:97.1px;top:331.0px;font-size:14px;line-height:24px;color:#444;letter-spacing:0.113px;">$Invoice_amount_USD *...</div>
<div class="a" style="left:12px;top:379px;width:518px;height:240px;border:1px solid #ececec;border-radius:9px;"></div>
<svg class="ic" style="left:33px;top:388px;stroke:#444;stroke-width:1" width="24" height="24" viewBox="0 0 24 24"><circle cx="12" cy="12" r="11.400"/><path d="M6.200,14.800 L12,9.300 L17.800,14.800"/></svg>
<div class="t" style="left:68.8px;top:388.7px;font-size:14px;line-height:24px;color:#444;letter-spacing:0.524px;">Clean-up (3 steps)</div>
<div class="a" style="left:65px;top:434px;width:20px;height:20px;border-radius:10px;background:#555;color:#fff;font-size:14px;-webkit-text-stroke:0.3px #fff;line-height:20.5px;text-align:center;">9</div>
<div class="t" style="left:97.1px;top:433.0px;font-size:14px;line-height:24px;color:#444;letter-spacing:0.292px;"><b>Delete columns</b> 'Days late', 'Invoice amount', 'Invoice currency'</div>
<div class="t" style="left:97.1px;top:457.0px;font-size:14px;line-height:24px;color:#444;letter-spacing:0.437px;">and 3 more columns</div>
<div class="a" style="left:65px;top:502px;width:20px;height:20px;border-radius:10px;background:#555;color:#fff;font-size:14px;-webkit-text-stroke:0.3px #fff;line-height:20.5px;text-align:center;letter-spacing:-1.200px;text-indent:-1.200px;">10</div>
<div class="t" style="left:97.1px;top:501.0px;font-size:14px;line-height:24px;color:#444;letter-spacing:0.312px;"><b>Round</b> 'Invoice amount USD' to 2 digits</div>
<div class="a" style="left:45px;top:536px;width:482px;height:40px;border-radius:9px;background:#f3f9fd"></div>
<div class="a" style="left:65px;top:546px;width:20px;height:20px;border-radius:10px;background:#3b8ede;color:#fff;font-size:14px;-webkit-text-stroke:0.3px #fff;line-height:20.5px;text-align:center;letter-spacing:-1.200px;text-indent:-1.200px;">11</div>
<div class="t" style="left:97.1px;top:545.0px;font-size:14px;line-height:24px;color:#3b8ede;letter-spacing:0.348px;"><b>Round</b> 'Late fee' to 2 digits</div>
<svg class="ic" style="left:35.5px;top:593.2px;stroke:#3b8ede;stroke-width:1.2" width="17" height="17" viewBox="0 0 17 17"><path d="M12.5,2.15 Q13.57,5.93 17.35,7 Q13.57,8.07 12.5,11.85 Q11.43,8.07 7.65,7 Q11.43,5.93 12.5,2.15Z M4.05,0.55 Q4.71,2.89 7.05,3.55 Q4.71,4.21 4.05,6.55 Q3.39,4.21 1.05,3.55 Q3.39,2.89 4.05,0.55Z M5.1,8.2 Q5.98,11.32 9.1,12.2 Q5.98,13.08 5.1,16.2 Q4.22,13.08 1.1,12.2 Q4.22,11.32 5.1,8.2Z"/></svg>
<div class="t" style="left:64.1px;top:592.4px;font-size:14px;line-height:20px;color:#3b8ede;letter-spacing:-0.252px;"><b>Ask Assistant</b></div>
<svg class="ic" style="left:188px;top:594px;stroke:#3b8ede;stroke-width:1.200" width="16" height="16" viewBox="0 0 16 16"><path d="M8,0.500 V15.500 M0.500,8 H15.500"/></svg>
<div class="t" style="left:216.0px;top:592.4px;font-size:14px;line-height:20px;color:#3b8ede;letter-spacing:-0.249px;"><b>Add step</b></div>
<svg class="ic" style="left:308.5px;top:593.3px;stroke:#3b8ede;stroke-width:1.200" width="17" height="17" viewBox="0 0 17 17"><path d="M4.500,12.200 L5.200,8.900 L12.500,1.600 a1.300,1.300 0 0 1 1.900,0 l0.900,0.900 a1.300,1.300 0 0 1 0,1.900 L8,11.600 Z M0.500,16.200 H16.500"/></svg>
<div class="t" style="left:337.0px;top:592.4px;font-size:14px;line-height:20px;color:#3b8ede;letter-spacing:-0.156px;"><b>Describe</b></div>
<svg style="left:424.79999999999995px;top:594.5px" width="5" height="16" viewBox="0 0 5 16"><circle cx="2.500" cy="3.600" r="1.950" fill="#3b8ede"/><circle cx="2.500" cy="8.300" r="1.950" fill="#3b8ede"/><circle cx="2.500" cy="13" r="1.950" fill="#3b8ede"/></svg>
<div class="a" style="left:12px;top:633px;width:517px;height:40px;border:1px dashed #a9cff2;border-radius:9px;"></div>
<div class="a" style="left:33px;top:642px;width:24px;height:24px;border-radius:12px;background:#3b8ede"></div>
<svg class="ic" style="left:38px;top:647px;stroke:#fff;stroke-width:1.300" width="14" height="14" viewBox="0 0 14 14"><path d="M7,0.800 V13.200 M0.800,7 H13.200"/></svg>
<div class="t" style="left:68.8px;top:643.0px;font-size:14.5px;line-height:24px;color:#3b8ede;letter-spacing:0.361px;">Add new block</div>
<svg class="ic" style="left:179px;top:647px;stroke:#555;stroke-width:1" width="15" height="15" viewBox="0 0 15 15"><circle cx="7.500" cy="7.500" r="6.800"/><path d="M5.700,5.900 a1.800,1.800 0 1 1 2.700,1.600 c-0.700,0.400 -0.900,0.800 -0.900,1.500"/><circle cx="7.500" cy="11" r="0.550" fill="#555" stroke="none"/></svg>
<svg class="ic" style="left:32px;top:695px;stroke:#3b8ede;stroke-width:1" width="24" height="24" viewBox="0 0 24 24"><circle cx="12" cy="12" r="11.400"/><circle cx="12" cy="12" r="4.500" stroke-width="1.300"/><circle cx="12" cy="12" r="1" fill="#3b8ede"/><path d="M12,4.700 V7.500 M12,16.500 V19.300 M4.700,12 H7.500 M16.500,12 H19.300" stroke-width="1.300"/></svg>
<div class="t" style="left:67.9px;top:696.0px;font-size:14.5px;line-height:24px;color:#3b8ede;letter-spacing:0.151px;">Writes to <b>Late fees</b></div>
<svg class="ic" style="left:67.5px;top:724.5px;stroke:#555;stroke-width:0.900" width="13" height="13" viewBox="0 0 13 13"><circle cx="6.500" cy="6.500" r="5.900"/><path d="M6.500,6 V9.500 M5.600,6 H6.500 M5.500,9.500 H7.500"/><circle cx="6.500" cy="3.800" r="0.600" fill="#555" stroke="none"/></svg>
<div class="t" style="left:86.0px;top:721.5px;font-size:12.5px;line-height:20px;color:#444;letter-spacing:0.281px;">Job will overwrite the target</div>
<svg class="ic" style="left:67.5px;top:748.8px;stroke:#555;stroke-width:0.900" width="13" height="13" viewBox="0 0 13 13"><circle cx="6.500" cy="6.500" r="5.900"/><path d="M6.500,6 V9.500 M5.600,6 H6.500 M5.500,9.500 H7.500"/><circle cx="6.500" cy="3.800" r="0.600" fill="#555" stroke="none"/></svg>
<div class="t" style="left:86.0px;top:745.5px;font-size:12.5px;line-height:20px;color:#444;letter-spacing:0.216px;">Rows with errors will be written to reject file</div>
</div>
<div class="a" style="left:1903px;top:116px;width:17px;height:783px;background:#f1f1f1"></div>
<div class="a" style="left:1903px;top:366px;width:17px;height:515px;background:#c8c8c8"></div>
<svg class="ic" style="left:1907px;top:120px;stroke:#444;stroke-width:1.500" width="9" height="7" viewBox="0 0 9 7"><path d="M1,5.500 L4.500,2 L8,5.500"/></svg>
<svg class="ic" style="left:1907px;top:888px;stroke:#444;stroke-width:1.500" width="9" height="7" viewBox="0 0 9 7"><path d="M1,1.500 L4.500,5 L8,1.500"/></svg>
<div class="a" style="left:1375px;top:911px;width:535px;height:114px;border:1px solid #c6c6c6;border-radius:9px;"></div>
<div class="t" style="top:926.4px;font-size:16px;line-height:24px;color:#8c8c8c;letter-spacing:0.598px;left:1390.1px;">What do you want to do with your data</div>
<div class="a" style="left:1390px;top:990px;width:33px;height:18px;border:1px solid #b9b9b9;border-radius:10px;background:#fff"></div>
<div class="a" style="left:1395.500px;top:994.500px;width:11px;height:11px;border-radius:6px;background:#c6c6c6"></div>
<div class="t" style="top:989.2px;font-size:14.5px;line-height:24px;color:#555;letter-spacing:0.167px;left:1433.0px;">Improve answers</div>
<svg class="ic" style="left:1549px;top:992.5px;stroke:#e8912d;stroke-width:1.200" width="15" height="15" viewBox="0 0 15 15"><path d="M7.500,1.300 L14.200,13.700 H0.800 Z"/><path d="M7.500,5.800 V9.500"/><circle cx="7.500" cy="11.600" r="0.650" fill="#e8912d" stroke="none"/></svg>
<div class="a" style="left:1712.500px;top:986px;width:28px;height:28px;border-radius:14px;background:#fdf7dd"></div>
<svg class="ic" style="left:1718px;top:991.5px;stroke:#ddb514;stroke-width:1.100" width="17" height="17" viewBox="0 0 17 17"><path d="M5.800,12 C4.300,10.800 4,9.700 4,8.500 a4.500,4.500 0 0 1 9,0 C13,9.700 12.700,10.800 11.200,12 V13.800 a1,1 0 0 1 -1,1 H6.800 a1,1 0 0 1 -1,-1 Z M6,12.300 H11 M8.500,0.500 V1.800 M2.300,8.500 H1 M16,8.500 H14.700 M3.600,3.600 L2.800,2.800 M13.400,3.600 L14.200,2.800"/></svg>
<div class="a" style="left:1745px;top:986px;width:152px;height:28px;border-radius:14px;background:#b5d4f1"></div>
<svg class="ic" style="left:1760px;top:991.5px;stroke:#fff;stroke-width:1.3" width="17" height="17" viewBox="0 0 17 17"><path d="M12.5,2.15 Q13.57,5.93 17.35,7 Q13.57,8.07 12.5,11.85 Q11.43,8.07 7.65,7 Q11.43,5.93 12.5,2.15Z M4.05,0.55 Q4.71,2.89 7.05,3.55 Q4.71,4.21 4.05,6.55 Q3.39,4.21 1.05,3.55 Q3.39,2.89 4.05,0.55Z M5.1,8.2 Q5.98,11.32 9.1,12.2 Q5.98,13.08 5.1,16.2 Q4.22,13.08 1.1,12.2 Q4.22,11.32 5.1,8.2Z"/></svg>
<div class="t" style="top:990.8px;font-size:13.5px;line-height:20px;color:#fff;letter-spacing:0.040px;left:1788.1px;"><b>Ask Assistant</b></div>
</div>
</body>
</html>
